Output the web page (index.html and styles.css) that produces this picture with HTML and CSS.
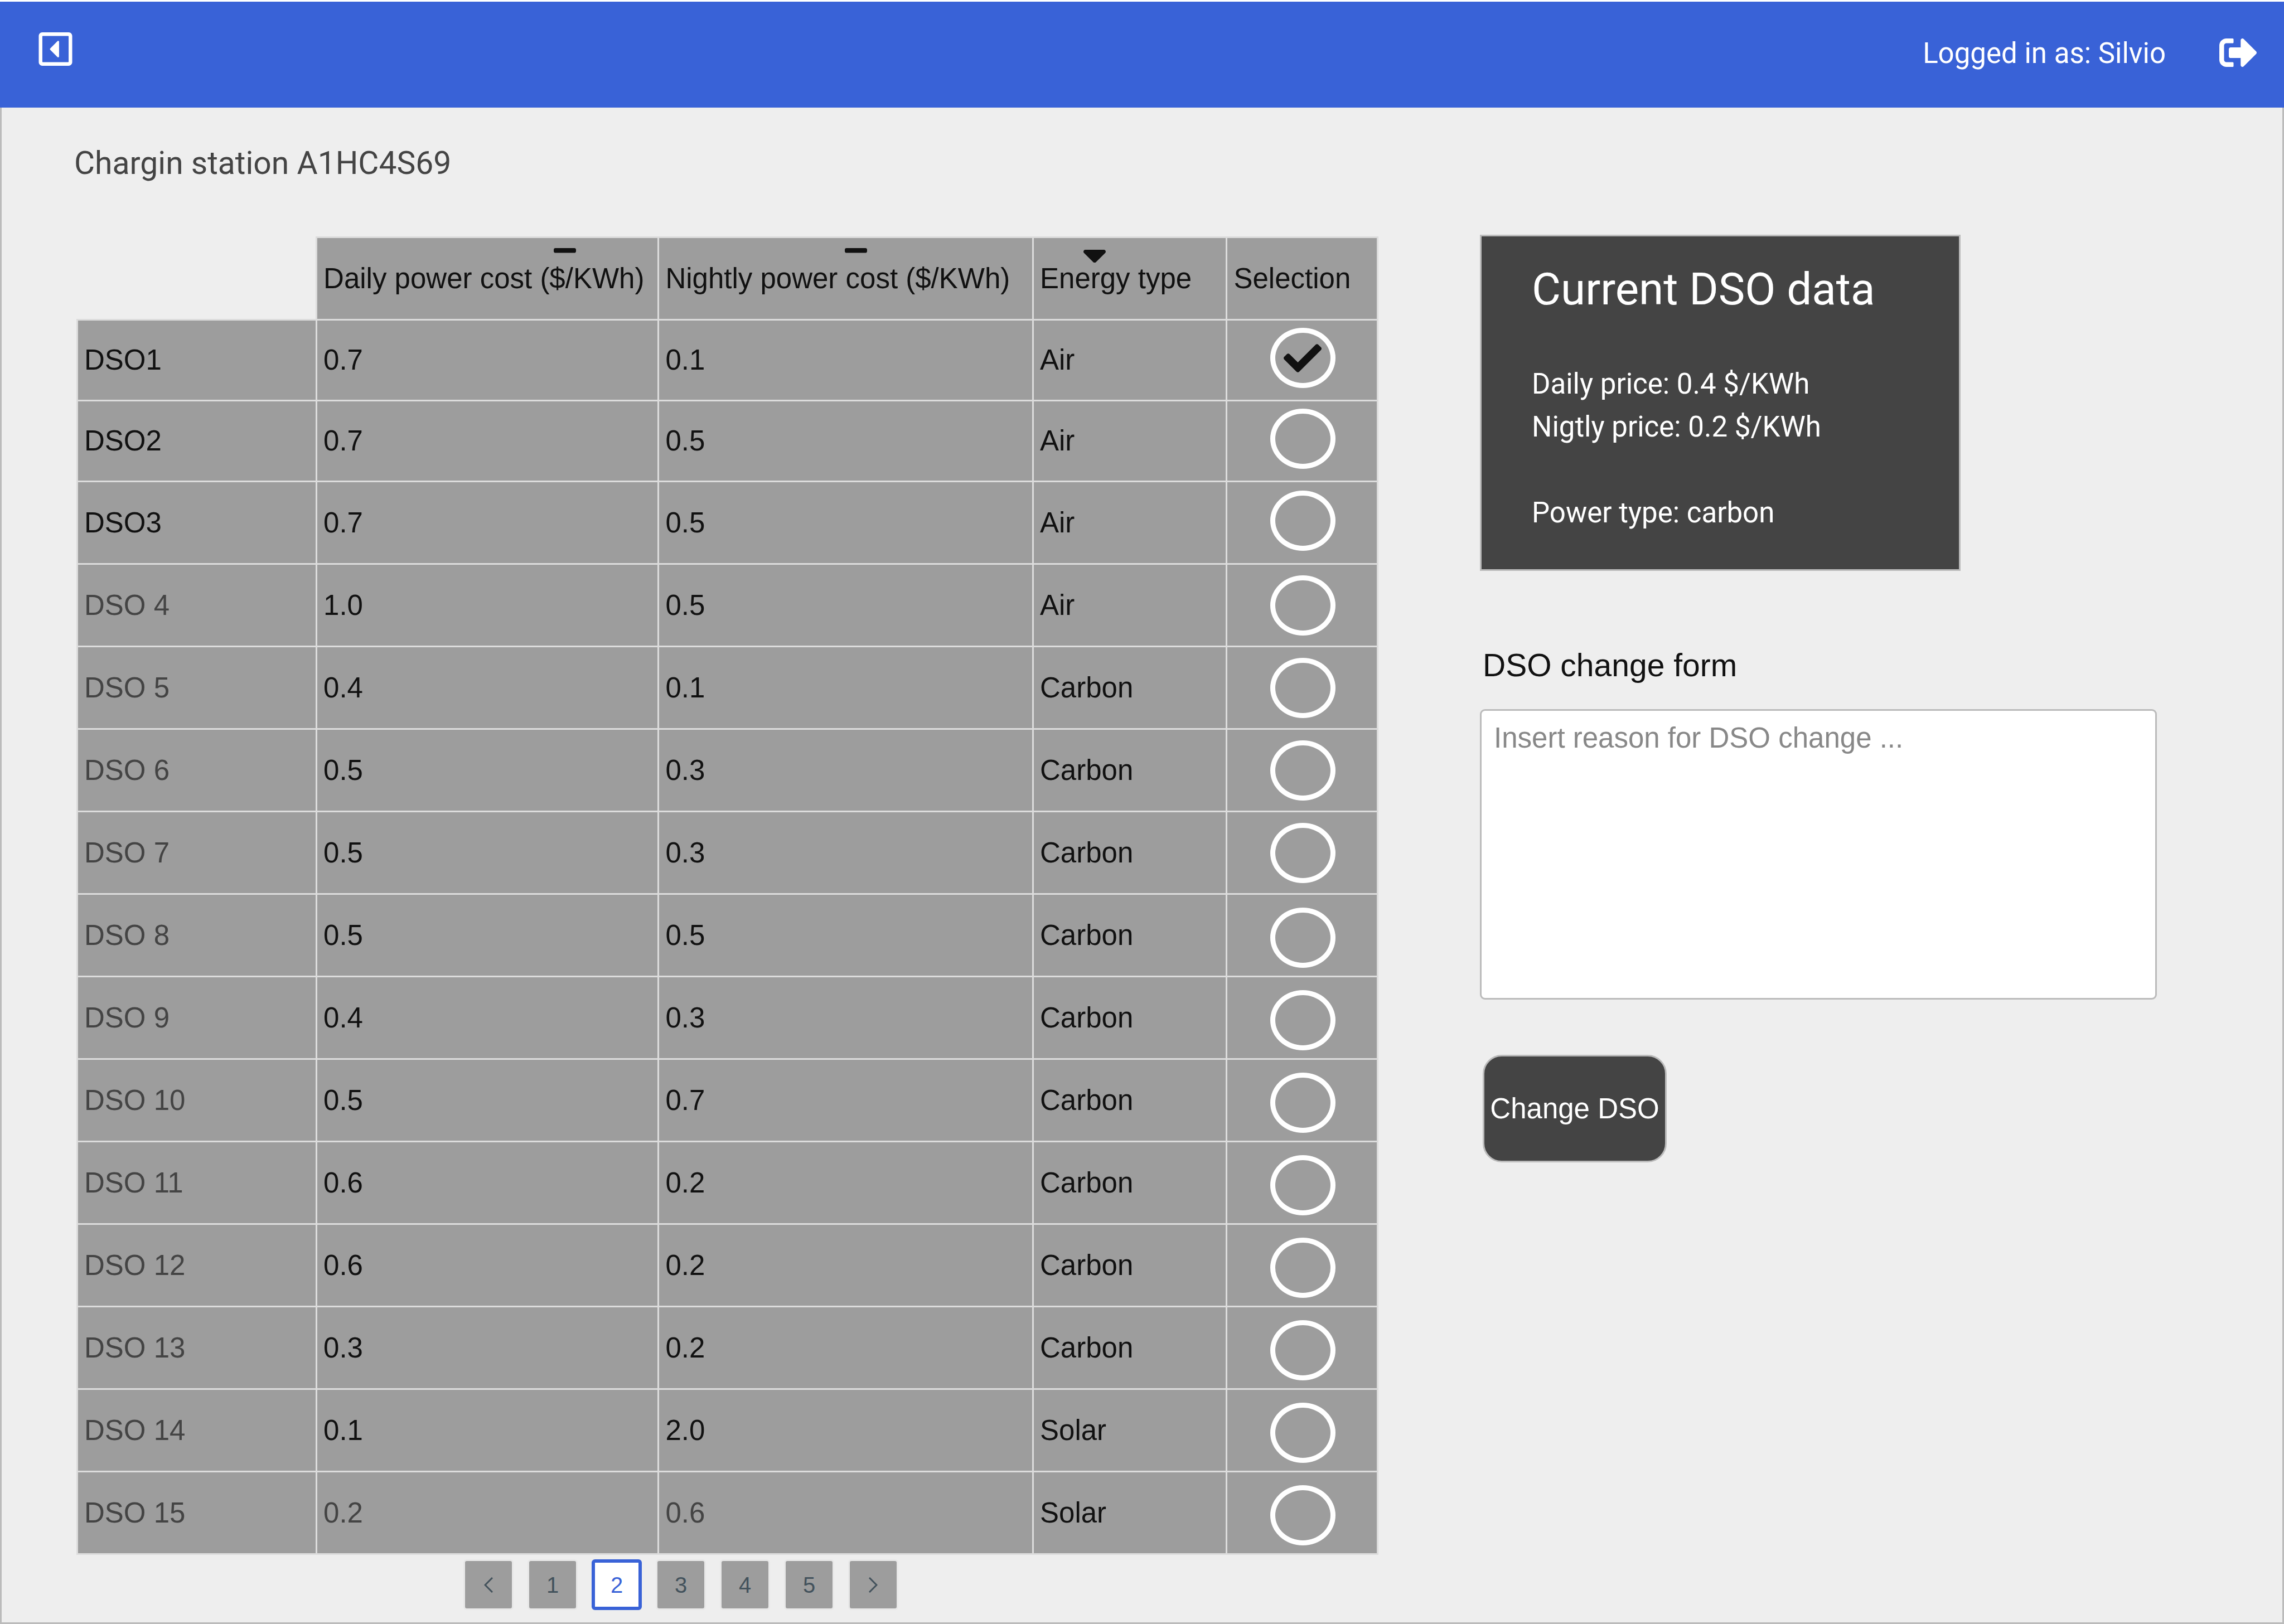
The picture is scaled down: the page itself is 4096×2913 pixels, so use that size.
FILE: index.html
```html
<!DOCTYPE html>
<html lang="en">
<head>
<meta charset="utf-8">
<title>Charging station</title>
<link rel="stylesheet" href="styles.css">
</head>
<body>
<header class="topbar">
  <a class="icon-link" href="#" aria-label="Back"><svg class="icon-back" viewBox="0 32 448 448" aria-hidden="true"><path d="M272 157.1v197.8c0 10.7-13 16.1-20.5 8.5l-98.3-98.9c-4.7-4.7-4.7-12.2 0-16.9l98.3-98.9c7.5-7.7 20.5-2.3 20.5 8.4zM448 80v352c0 26.5-21.5 48-48 48H48c-26.5 0-48-21.5-48-48V80c0-26.5 21.5-48 48-48h352c26.5 0 48 21.5 48 48zm-48 346V86c0-3.3-2.7-6-6-6H54c-3.3 0-6 2.7-6 6v340c0 3.3 2.7 6 6 6h340c3.3 0 6-2.7 6-6z"/></svg></a>
  <div class="user">
    <span>Logged in as: Silvio</span>
    <a class="icon-link" href="#" aria-label="Log out"><svg class="icon-logout" viewBox="0 64 504 384" aria-hidden="true"><path d="M497 273L329 441c-15 15-41 4.5-41-17v-96H152c-13.3 0-24-10.7-24-24v-96c0-13.3 10.7-24 24-24h136V88c0-21.4 25.9-32 41-17l168 168c9.3 9.4 9.3 24.6 0 34zM192 436v-40c0-6.6-5.4-12-12-12H96c-17.7 0-32-14.3-32-32V160c0-17.7 14.3-32 32-32h84c6.6 0 12-5.4 12-12V76c0-6.6-5.4-12-12-12H96c-53 0-96 43-96 96v192c0 53 43 96 96 96h84c6.6 0 12-5.4 12-12z"/></svg></a>
  </div>
</header>
<main class="page">
  <h1 class="page-title">Chargin station A1HC4S69</h1>
  <div class="columns">
    <section class="offers">
      <table class="dso-table">
        <colgroup><col class="col-name"><col class="col-daily"><col class="col-nightly"><col class="col-type"><col class="col-select"></colgroup>
        <thead>
          <tr>
            <td class="corner"></td>
            <th scope="col"><button class="sort" type="button">Daily power cost ($/KWh)<svg class="sort-icon sort-daily" viewBox="0 208 448 96" aria-hidden="true"><path d="M416 208H32c-17.67 0-32 14.33-32 32v32c0 17.67 14.33 32 32 32h384c17.67 0 32-14.33 32-32v-32c0-17.67-14.33-32-32-32z"/></svg></button></th>
            <th scope="col"><button class="sort" type="button">Nightly power cost ($/KWh)<svg class="sort-icon sort-nightly" viewBox="0 208 448 96" aria-hidden="true"><path d="M416 208H32c-17.67 0-32 14.33-32 32v32c0 17.67 14.33 32 32 32h384c17.67 0 32-14.33 32-32v-32c0-17.67-14.33-32-32-32z"/></svg></button></th>
            <th scope="col"><button class="sort" type="button">Energy type<svg class="sort-icon sort-type" viewBox="17 288 286 167" aria-hidden="true"><path d="M41 288h238c21.4 0 32.1 25.9 17 41L177 448c-9.4 9.4-24.6 9.4-33.9 0L24 329c-15.1-15.1-4.4-41 17-41z"/></svg></button></th>
            <th scope="col">Selection</th>
          </tr>
        </thead>
        <tbody>
          <tr><th scope="row">DSO1</th><td>0.7</td><td>0.1</td><td>Air</td><td class="pick"><label class="choice"><input type="radio" name="dso" aria-label="DSO1" checked><svg class="check" viewBox="0 65 512 382" aria-hidden="true"><path d="M173.898 439.404l-166.4-166.4c-9.997-9.997-9.997-26.206 0-36.204l36.203-36.204c9.997-9.998 26.207-9.998 36.204 0L192 312.69 432.095 72.596c9.997-9.997 26.207-9.997 36.204 0l36.203 36.204c9.997 9.997 9.997 26.206 0 36.204l-294.4 294.401c-9.998 9.997-26.207 9.997-36.204-.001z"/></svg></label></td></tr>
          <tr><th scope="row">DSO2</th><td>0.7</td><td>0.5</td><td>Air</td><td class="pick"><label class="choice"><input type="radio" name="dso" aria-label="DSO2"></label></td></tr>
          <tr><th scope="row">DSO3</th><td>0.7</td><td>0.5</td><td>Air</td><td class="pick"><label class="choice"><input type="radio" name="dso" aria-label="DSO3"></label></td></tr>
          <tr><th class="muted" scope="row">DSO 4</th><td>1.0</td><td>0.5</td><td>Air</td><td class="pick"><label class="choice"><input type="radio" name="dso" aria-label="DSO 4"></label></td></tr>
          <tr><th class="muted" scope="row">DSO 5</th><td>0.4</td><td>0.1</td><td>Carbon</td><td class="pick"><label class="choice"><input type="radio" name="dso" aria-label="DSO 5"></label></td></tr>
          <tr><th class="muted" scope="row">DSO 6</th><td>0.5</td><td>0.3</td><td>Carbon</td><td class="pick"><label class="choice"><input type="radio" name="dso" aria-label="DSO 6"></label></td></tr>
          <tr><th class="muted" scope="row">DSO 7</th><td>0.5</td><td>0.3</td><td>Carbon</td><td class="pick"><label class="choice"><input type="radio" name="dso" aria-label="DSO 7"></label></td></tr>
          <tr><th class="muted" scope="row">DSO 8</th><td>0.5</td><td>0.5</td><td>Carbon</td><td class="pick"><label class="choice"><input type="radio" name="dso" aria-label="DSO 8"></label></td></tr>
          <tr><th class="muted" scope="row">DSO 9</th><td>0.4</td><td>0.3</td><td>Carbon</td><td class="pick"><label class="choice"><input type="radio" name="dso" aria-label="DSO 9"></label></td></tr>
          <tr><th class="muted" scope="row">DSO 10</th><td>0.5</td><td>0.7</td><td>Carbon</td><td class="pick"><label class="choice"><input type="radio" name="dso" aria-label="DSO 10"></label></td></tr>
          <tr><th class="muted" scope="row">DSO 11</th><td>0.6</td><td>0.2</td><td>Carbon</td><td class="pick"><label class="choice"><input type="radio" name="dso" aria-label="DSO 11"></label></td></tr>
          <tr><th class="muted" scope="row">DSO 12</th><td>0.6</td><td>0.2</td><td>Carbon</td><td class="pick"><label class="choice"><input type="radio" name="dso" aria-label="DSO 12"></label></td></tr>
          <tr><th class="muted" scope="row">DSO 13</th><td>0.3</td><td>0.2</td><td>Carbon</td><td class="pick"><label class="choice"><input type="radio" name="dso" aria-label="DSO 13"></label></td></tr>
          <tr><th class="muted" scope="row">DSO 14</th><td>0.1</td><td>2.0</td><td>Solar</td><td class="pick"><label class="choice"><input type="radio" name="dso" aria-label="DSO 14"></label></td></tr>
          <tr><th class="muted" scope="row">DSO 15</th><td class="muted">0.2</td><td class="muted">0.6</td><td>Solar</td><td class="pick"><label class="choice"><input type="radio" name="dso" aria-label="DSO 15"></label></td></tr>
        </tbody>
      </table>
      <nav class="pager" aria-label="Pages">
        <button class="page-btn" type="button" aria-label="Previous page"><svg class="chevron" viewBox="0 0 16 28" aria-hidden="true"><path d="M15 1L2 14l13 13"/></svg></button>
        <button class="page-btn" type="button">1</button>
        <button class="page-btn current" type="button" aria-current="page">2</button>
        <button class="page-btn" type="button">3</button>
        <button class="page-btn" type="button">4</button>
        <button class="page-btn" type="button">5</button>
        <button class="page-btn" type="button" aria-label="Next page"><svg class="chevron" viewBox="0 0 16 28" aria-hidden="true"><path d="M1 1l13 13L1 27"/></svg></button>
      </nav>
    </section>
    <aside class="side">
      <section class="card">
        <h2 class="card-title">Current DSO data</h2>
        <p>Daily price: 0.4 $/KWh</p>
        <p>Nigtly price: 0.2 $/KWh</p>
        <p class="power">Power type: carbon</p>
      </section>
      <form class="change-form">
        <label class="form-title" for="reason">DSO change form</label>
        <textarea class="reason" id="reason" placeholder="Insert reason for DSO change ..."></textarea>
        <button class="submit" type="button">Change DSO</button>
      </form>
    </aside>
  </div>
</main>
</body>
</html>
```
FILE: styles.css
```css
* {
  box-sizing: border-box;
}

body {
  margin: 0;
  padding-top: 3px;
  min-height: 100vh;
  display: flex;
  flex-direction: column;
  background: #fff;
  color: #111;
  font-family: "Liberation Sans", Arial, sans-serif;
  font-size: 51px;
  line-height: 60px;
}

button,
textarea {
  font: inherit;
  color: inherit;
}

button {
  cursor: pointer;
}

svg {
  display: block;
  fill: currentColor;
}

h1,
h2,
p {
  margin: 0;
  font-weight: 400;
}

/* Top bar */

.topbar {
  display: flex;
  align-items: flex-start;
  justify-content: space-between;
  padding: 55px 49px 67px 69px;
  background: #3962d7;
  color: #fff;
  font-family: Roboto, sans-serif;
}

.icon-link {
  color: inherit;
}

.icon-back {
  width: 61px;
  height: 60px;
}

.user {
  display: flex;
  align-items: center;
  gap: 96px;
  margin-top: 8px;
}

.icon-logout {
  width: 67px;
  height: 51px;
  margin-bottom: 4px;
}

/* Page */

.page {
  flex: 1;
  padding: 66px 225px 20px 130px;
  border: 3px solid #bbb;
  border-top: 0;
  background: #eee;
}

.page-title {
  font-family: Roboto, sans-serif;
  font-size: 57px;
  line-height: 68px;
  color: #444;
}

.columns {
  display: grid;
  grid-template-columns: minmax(0, 2335fr) minmax(0, 1214fr);
  gap: 182px;
  align-items: start;
  padding: 94px 0 0 4px;
}

/* Offers table */

.offers {
  padding-top: 3px;
}

.dso-table {
  width: 100%;
  table-layout: fixed;
  border-collapse: collapse;
}

.col-name { width: 18.4%; }
.col-daily { width: 26.3%; }
.col-nightly { width: 28.8%; }
.col-type { width: 14.9%; }
.col-select { width: 11.6%; }

.dso-table tr {
  height: 148px;
}

.dso-table tbody tr:nth-child(-n+2) {
  height: 145px;
}

.dso-table th,
.dso-table td {
  position: relative;
  padding: 0 0 0 11px;
  border: 3px solid #dcdcdc;
  background: #9d9d9d;
  background-clip: padding-box;
  font-weight: 400;
  text-align: left;
  vertical-align: middle;
  white-space: nowrap;
}

.dso-table .corner {
  border: 0;
  background: none;
}

.dso-table .muted {
  color: #444;
}

.sort {
  display: block;
  padding: 0;
  border: 0;
  background: none;
}

.sort-icon {
  position: absolute;
  top: 18px;
  width: 40px;
}

.sort-daily { left: 424px; }
.sort-nightly { left: 333px; }
.sort-type { left: 89px; top: 21px; }

.dso-table .pick {
  padding: 0 0 0 2px;
}

/* The circles run slightly high in the first rows and low in the last ones */
.dso-table tr:nth-child(-n+3) .pick {
  padding-bottom: 8px;
}

.dso-table tr:nth-child(n+8) .pick {
  padding-top: 8px;
}

.choice {
  display: grid;
  place-items: center;
}

.choice input,
.check {
  grid-area: 1 / 1;
}

.choice input {
  appearance: none;
  width: 117px;
  height: 108px;
  margin: 0;
  border: 9px solid #fff;
  border-radius: 50%;
}

.check {
  position: relative;
  width: 68px;
  height: 51px;
}

/* Pager */

.pager {
  display: flex;
  gap: 25px;
  padding: 8px 0 0 694px;
}

.page-btn {
  display: grid;
  place-items: center;
  width: 90px;
  height: 91px;
  padding: 0;
  border: 3px solid #e8e8e8;
  border-radius: 6px;
  background: #9d9d9d;
  color: #43525c;
  font-size: 40px;
}

.page-btn.current {
  border: 6px solid #3962d7;
  background: #fff;
  color: #3962d7;
}

.chevron {
  width: 16px;
  height: 28px;
  fill: none;
  stroke: currentColor;
  stroke-width: 3;
}

/* Side column */

.card {
  width: 71%;
  padding: 35px 0 63px 90px;
  border: 3px solid #bbb;
  background: #444;
  color: #fff;
  font-family: Roboto, sans-serif;
  line-height: 77px;
}

.card-title {
  margin-bottom: 71px;
  font-size: 80px;
  line-height: 120px;
}

.power {
  margin-top: 77px;
}

.change-form {
  display: flex;
  flex-direction: column;
  align-items: flex-start;
  padding-top: 137px;
}

.form-title {
  margin-left: 5px;
  font-size: 57px;
  line-height: 64px;
}

.reason {
  width: 100%;
  height: 521px;
  margin: 47px 0 99px;
  padding: 19px 22px;
  border: 3px solid #bbb;
  border-radius: 9px;
  background: #fff;
  resize: none;
}

.reason::placeholder {
  color: #888;
  opacity: 1;
}

.submit {
  width: 330px;
  height: 193px;
  margin-left: 5px;
  padding: 0;
  border: 3px solid #bbb;
  border-radius: 34px;
  background: #444;
  color: #fff;
}
```
